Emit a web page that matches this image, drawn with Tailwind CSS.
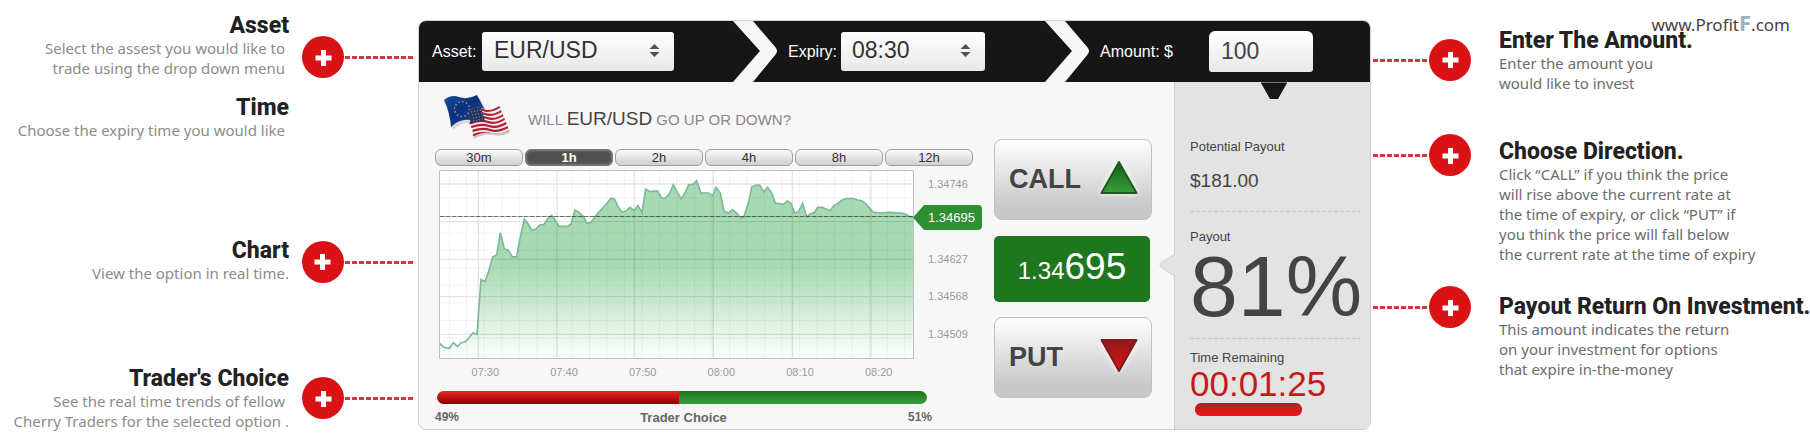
<!DOCTYPE html>
<html lang="en">
<head>
    <meta charset="UTF-8">
    <meta name="viewport" content="width=device-width, initial-scale=1.0">
    <title>How To Trade - ProfitF</title>
    <script src="https://cdn.jsdelivr.net/npm/@tailwindcss/browser@4"></script>
</head>
<body class="bg-white font-['Liberation_Sans',Arial,sans-serif]">
    <div class="relative flex items-start">

        <!-- Left notes -->
        <aside class="w-[415px] shrink-0 pt-3 text-right font-['Noto_Sans',sans-serif] text-[15px] leading-5 text-[#8c8c8c]">
            <div class="flex items-end">
                <div class="flex-1 pr-1">
                    <h2 class="-mr-1 -mb-[2px] font-[Roboto,sans-serif] text-[23px] leading-7 font-extrabold text-[#222]">Asset</h2>
                    <p>Select the assest you would like to<br>trade using the drop down menu</p>
                </div>
                <div class="ml-[13px] flex items-center">
                    <svg class="size-[42px]" viewBox="0 0 42 42"><circle cx="21" cy="21" r="21" fill="#d91216"/><path d="M21.500 14v16M13.500 22h16" stroke="#fff" stroke-width="5"/></svg>
                    <svg class="ml-px h-[3px] w-[70px]"><path d="M0 1.500h70" stroke="#cc3a3f" stroke-width="3" stroke-dasharray="5 2"/></svg>
                </div>
            </div>

            <div class="mt-4 pr-[130px]">
                <h2 class="-mr-1 -mb-[2px] font-[Roboto,sans-serif] text-[23px] leading-7 font-extrabold text-[#222]">Time</h2>
                <p class="whitespace-nowrap">Choose the expiry time you would like</p>
            </div>

            <div class="mt-[97px] flex items-end">
                <div class="flex-1">
                    <h2 class="-mb-[2px] font-[Roboto,sans-serif] text-[23px] leading-7 font-extrabold text-[#222]">Chart</h2>
                    <p>View the option in real time.</p>
                </div>
                <div class="ml-[13px] flex items-center">
                    <svg class="size-[42px]" viewBox="0 0 42 42"><circle cx="21" cy="21" r="21" fill="#d91216"/><path d="M20.500 13v16M12.500 21h16" stroke="#fff" stroke-width="5"/></svg>
                    <svg class="ml-px h-[3px] w-[70px]"><path d="M0 1.500h70" stroke="#cc3a3f" stroke-width="3" stroke-dasharray="5 2"/></svg>
                </div>
            </div>

            <div class="mt-[82px] flex items-center">
                <div class="flex-1">
                    <h2 class="-mb-[2px] font-[Roboto,sans-serif] text-[23px] leading-7 font-extrabold text-[#222]">Trader's Choice</h2>
                    <p class="pr-1">See the real time trends of fellow</p>
                    <p class="whitespace-nowrap">Cherry Traders for the selected option .</p>
                </div>
                <div class="ml-[13px] flex items-center">
                    <svg class="size-[42px]" viewBox="0 0 42 42"><circle cx="21" cy="21" r="21" fill="#d91216"/><path d="M21.500 14v16M13.500 22h16" stroke="#fff" stroke-width="5"/></svg>
                    <svg class="ml-px h-[3px] w-[70px]"><path d="M0 1.500h70" stroke="#cc3a3f" stroke-width="3" stroke-dasharray="5 2"/></svg>
                </div>
            </div>
        </aside>

        <!-- Trading panel -->
        <main class="mt-5 ml-[3px] min-w-0 flex-1 rounded-lg border border-[#d0d0d0] bg-[#f7f7f7]">
            <form class="flex h-[61px] items-center rounded-t-[7px] bg-[#161616] pl-[13px] text-white">
                <label for="asset" class="w-[50px]">Asset:</label>
                <div class="relative">
                    <select id="asset" class="h-[39px] w-48 appearance-none rounded-[3px] bg-linear-to-b from-white to-[#e8e8e8] pb-[2px] pl-3 text-[23px] text-[#333]">
                        <option>EUR/USD</option>
                    </select>
                    <svg class="pointer-events-none absolute top-3 right-[14px] h-[13px] w-[11px]" viewBox="0 0 11 13" fill="#4a5358"><path d="M5.500 0l5 5h-10zM5.500 13l5-5h-10z"/></svg>
                </div>
                <svg class="ml-[59px] h-[61px] w-11" viewBox="0 0 44 61" fill="#f7f7f7"><path d="M0 0h20l23 27q2 3 0 6L20 61H0l27-31z"/></svg>
                <label for="expiry" class="ml-[11px] w-[53px]">Expiry:</label>
                <div class="relative">
                    <select id="expiry" class="h-[39px] w-36 appearance-none rounded-[3px] bg-linear-to-b from-white to-[#e8e8e8] pb-[2px] pl-[11px] text-[23px] text-[#333]">
                        <option>08:30</option>
                    </select>
                    <svg class="pointer-events-none absolute top-3 right-[14px] h-[13px] w-[11px]" viewBox="0 0 11 13" fill="#4a5358"><path d="M5.500 0l5 5h-10zM5.500 13l5-5h-10z"/></svg>
                </div>
                <svg class="ml-[60px] h-[61px] w-11" viewBox="0 0 44 61" fill="#f7f7f7"><path d="M0 0h20l23 27q2 3 0 6L20 61H0l27-31z"/></svg>
                <label for="amount" class="ml-[11px] w-[109px]">Amount: $</label>
                <input id="amount" type="text" value="100" class="h-[41px] w-[104px] rounded-t-md rounded-b-[3px] bg-linear-to-b from-white to-[#e8e8e8] pl-3 text-[23px] text-[#444]">
            </form>

            <div class="flex">
                <!-- Chart -->
                <section class="min-w-0 flex-1 pl-4">
                    <div class="flex items-start pt-[13px] pl-2">
                        <svg class="h-[44px] w-[68px]" viewBox="0 0 68 44">
                            <defs>
                                <linearGradient id="eu" x1="0" y1="0" x2="1" y2="1"><stop offset="0" stop-color="#1d4fa3"/><stop offset=".4" stop-color="#0c2f7c"/><stop offset=".7" stop-color="#123f96"/><stop offset="1" stop-color="#071f55"/></linearGradient>
                                <clipPath id="us"><path d="M26 15q8-4 15-1t15-4l10 25q-7 5-17 3t-19 4q1-6-4-14z"/></clipPath>
                            </defs>
                            <path d="M2 5q7-6 15-3t18-2l11 21q-6 6-17 4T8 32Q7 18 2 5z" fill="#000" opacity=".12" transform="translate(2 3)"/>
                            <path d="M1 5q7-6 15-3t18-2l11 21q-6 6-17 4T8 32Q7 18 1 5z" fill="url(#eu)"/>
                            <circle cx="19" cy="14" r="7.500" fill="none" stroke="#b3a850" stroke-width="1.400" stroke-dasharray="1.400 2.530"/>
                            <path d="M26 15q8-4 15-1t15-4l10 25q-7 5-17 3t-19 4q1-6-4-14z" fill="#000" opacity=".2" transform="translate(1 2)"/>
                            <g clip-path="url(#us)">
                                <path d="M20 5h48v39H20z" fill="#f3eded"/>
                                <g fill="none" stroke="#b51f35" stroke-width="2.100">
                                    <path d="M22 17q10-5 18-2t18-4"/>
                                    <path d="M22 21q12-5 20-2t18-4"/>
                                    <path d="M24 25q12-5 20-2t18-4"/>
                                    <path d="M25 29q12-5 20-2t18-4"/>
                                    <path d="M26 33q12-5 20-2t19-4"/>
                                    <path d="M27 37q12-5 20-2t20-4"/>
                                    <path d="M28 41q12-5 20-2t20-4"/>
                                </g>
                                <path d="M24 15q8-5 14-2l4 13q-7-1-14 3z" fill="#27375f"/>
                                <path d="M28 17l10-2M29 20l10-2M30 23l10-2M30 26l10-2" stroke="#8e98b3" stroke-dasharray="1 2"/>
                            </g>
                        </svg>
                        <h1 class="pt-3 pl-[17px] text-[15px] leading-6 text-[#888]">WILL <span class="text-[19px] text-[#444]">EUR/USD</span> GO UP OR DOWN?</h1>
                    </div>

                    <div class="mt-[10px] mr-[10px] grid grid-cols-6 gap-[2px] text-[13px] text-[#333]">
                        <button class="h-[17px] rounded-md border border-[#a0a0a0] bg-linear-to-b from-[#fafafa] to-[#cfcfcf] leading-[15px]">30m</button>
                        <button class="h-[17px] rounded-md border border-[#777] bg-[#505050] leading-[15px] font-bold text-white inset-shadow-[0_0_3px_#aaa]">1h</button>
                        <button class="h-[17px] rounded-md border border-[#a0a0a0] bg-linear-to-b from-[#fafafa] to-[#cfcfcf] leading-[15px]">2h</button>
                        <button class="h-[17px] rounded-md border border-[#a0a0a0] bg-linear-to-b from-[#fafafa] to-[#cfcfcf] leading-[15px]">4h</button>
                        <button class="h-[17px] rounded-md border border-[#a0a0a0] bg-linear-to-b from-[#fafafa] to-[#cfcfcf] leading-[15px]">8h</button>
                        <button class="h-[17px] rounded-md border border-[#a0a0a0] bg-linear-to-b from-[#fafafa] to-[#cfcfcf] leading-[15px]">12h</button>
                    </div>

                    <div class="mt-1 flex pl-1">
                        <svg class="h-[189px] min-w-0 flex-1" viewBox="42 90 1425 567" preserveAspectRatio="none">
                            <defs>
                                <linearGradient id="area" gradientUnits="userSpaceOnUse" x1="0" y1="370" x2="0" y2="657"><stop offset="0" stop-color="#a6dab3"/><stop offset="1" stop-color="#fdfffd"/></linearGradient>
                            </defs>
                            <path d="M42 90h1425v567H42z" fill="#fff"/>
                            <path d="M44 610L56 622 73 625 85 608 97 619 109 608 122 605 133 592 144 579 156 583 168 419 180 425 191 394 203 351 215 345 226 278 238 326 249 330 262 350 275 351 285 295 298 237 310 253 321 271 333 267 344 255 356 254 369 235 380 226 392 242 403 259 427 259 438 252 450 210 462 217 474 228 486 250 497 248 509 232 521 217 533 204 545 191 557 176 568 176 580 202 591 216 603 213 615 202 627 211 639 197 651 218 662 147 675 155 697 153 710 174 721 174 734 160 745 134 757 157 768 176 779 161 791 134 803 134 815 122 828 159 850 159 863 168 873 142 886 160 897 214 911 219 922 209 935 219 945 232 956 232 970 190 980 141 992 136 1004 135 1016 156 1028 142 1040 159 1051 189 1075 193 1087 183 1098 190 1109 219 1121 215 1133 190 1145 231 1156 221 1168 218 1178 202 1191 202 1215 212 1227 196 1238 191 1250 181 1262 176 1286 176 1298 180 1311 182 1322 191 1334 204 1344 216 1368 219 1391 217 1430 219 1442 223 1452 229 1466 232V657H44z" fill="url(#area)"/>
                            <!-- minor grid -->
                            <path d="M73 90v567M125 90v567M178 90v567M231 90v567M283 90v567M336 90v567M388 90v567M441 90v567M494 90v567M546 90v567M598 90v567M651 90v567M703 90v567M756 90v567M809 90v567M861 90v567M914 90v567M966 90v567M1019 90v567M1071 90v567M1124 90v567M1176 90v567M1229 90v567M1282 90v567M1334 90v567M1387 90v567M1439 90v567M42 121h1425M42 174h1425M42 279h1425M42 331h1425M42 384h1425M42 436h1425M42 489h1425M42 541h1425M42 594h1425M42 646h1425" fill="none" stroke="#000" stroke-opacity=".07" stroke-width="3" stroke-dasharray="6 4"/>
                            <!-- major grid -->
                            <path d="M160 90v567M396 90v567M628 90v567M865 90v567M1102 90v567M1338 90v567M42 132h1425M42 245h1425M42 358h1425M42 470h1425M42 583h1425" fill="none" stroke="#000" stroke-opacity=".1" stroke-width="4"/>
                            <path d="M44 610L56 622 73 625 85 608 97 619 109 608 122 605 133 592 144 579 156 583 168 419 180 425 191 394 203 351 215 345 226 278 238 326 249 330 262 350 275 351 285 295 298 237 310 253 321 271 333 267 344 255 356 254 369 235 380 226 392 242 403 259 427 259 438 252 450 210 462 217 474 228 486 250 497 248 509 232 521 217 533 204 545 191 557 176 568 176 580 202 591 216 603 213 615 202 627 211 639 197 651 218 662 147 675 155 697 153 710 174 721 174 734 160 745 134 757 157 768 176 779 161 791 134 803 134 815 122 828 159 850 159 863 168 873 142 886 160 897 214 911 219 922 209 935 219 945 232 956 232 970 190 980 141 992 136 1004 135 1016 156 1028 142 1040 159 1051 189 1075 193 1087 183 1098 190 1109 219 1121 215 1133 190 1145 231 1156 221 1168 218 1178 202 1191 202 1215 212 1227 196 1238 191 1250 181 1262 176 1286 176 1298 180 1311 182 1322 191 1334 204 1344 216 1368 219 1391 217 1430 219 1442 223 1452 229 1466 232" fill="none" stroke="#7dba9a" stroke-width="5"/>
                            <path d="M44 229.500h1420" stroke="#222" stroke-opacity=".65" stroke-width="3" stroke-dasharray="15 3"/>
                            <path d="M43.500 91.500h1422v564h-1422z" fill="none" stroke="#c4c0c0" stroke-width="3"/>
                        </svg>
                        <div class="relative w-[69px] shrink-0 text-[11px] text-[#999]">
                            <div class="-mt-[5px] grid h-[188px] grid-rows-5 items-center pl-[14px]">
                                <span class="row-start-1">1.34746</span>
                                <span class="row-start-3">1.34627</span>
                                <span class="row-start-4">1.34568</span>
                                <span class="row-start-5">1.34509</span>
                            </div>
                            <div class="absolute top-[35px] -left-px flex h-[25px]">
                                <svg class="h-[25px] w-3" viewBox="0 0 12 25" fill="#2f8f33"><path d="M12 0h-1L0 12.500 11 25h1z"/></svg>
                                <span class="w-[57px] rounded-r-sm bg-[#2f8f33] pl-[3px] text-[13px] leading-[26px] text-white">1.34695</span>
                            </div>
                        </div>
                    </div>

                    <div class="mr-[65px] ml-[11px] grid grid-cols-6 pt-1 text-center text-[11px] leading-[18px] text-[#999]">
                        <span>07:30</span>
                        <span>07:40</span>
                        <span>07:50</span>
                        <span>08:00</span>
                        <span>08:10</span>
                        <span>08:20</span>
                    </div>

                    <div class="mt-[10px] mr-[56px] ml-[2px] flex h-[13px] overflow-hidden rounded-full">
                        <div class="bg-linear-to-b from-[#ee2222] via-[#c01010] to-[#900000]" style="width: 49.4%"></div>
                        <div class="flex-1 bg-linear-to-b from-[#1c741c] to-[#38a038]"></div>
                    </div>
                    <div class="mr-[51px] flex justify-between pt-[5px] pb-[3px] text-[12px] leading-[17px] font-bold text-[#666]">
                        <span>49%</span>
                        <span class="text-[13px]">Trader Choice</span>
                        <span>51%</span>
                    </div>
                </section>

                <!-- Call / put -->
                <section class="ml-[11px] w-[158px] shrink-0 pt-[57px]">
                    <button class="flex h-[81px] w-full items-center justify-between rounded-lg border border-[#c4c0c0] bg-linear-to-b from-white to-[#c8c8c8] to-85% pr-[9px] pl-[14px] text-[27px] font-bold text-[#444]">
                        CALL
                        <svg class="h-[43px] w-[46px] drop-shadow-[0_0_3px_#fffff0]" viewBox="0 0 46 43">
                            <defs><linearGradient id="up" x1="0" y1="0" x2="0" y2="1"><stop offset="0" stop-color="#145c14"/><stop offset="1" stop-color="#3a9e3e"/></linearGradient></defs>
                            <path d="M23 4L5.500 35h35z" fill="url(#up)" stroke="#1d5a20" stroke-width="2" stroke-linejoin="round"/>
                        </svg>
                    </button>
                    <div class="mt-[16px] mr-[2px] h-[66px] rounded-[5px] bg-[#1e761e] text-center text-2xl leading-[62px] text-white">1.34<span class="text-[37px]">695</span></div>
                    <button class="mt-[15px] flex h-[81px] w-full items-center justify-between rounded-lg border border-[#c4c0c0] bg-linear-to-b from-white to-[#c8c8c8] to-85% pr-[9px] pl-[14px] text-[27px] font-bold text-[#444]">
                        PUT
                        <svg class="h-[43px] w-[46px] drop-shadow-[0_0_3px_#fffff0]" viewBox="0 0 46 43">
                            <defs><linearGradient id="down" x1="0" y1="0" x2="0" y2="1"><stop offset="0" stop-color="#8e1a1a"/><stop offset="1" stop-color="#e01212"/></linearGradient></defs>
                            <path d="M23 35L5.500 4h35z" fill="url(#down)" stroke="#7e1c1c" stroke-width="2" stroke-linejoin="round"/>
                        </svg>
                    </button>
                </section>

                <!-- Payout -->
                <section class="relative ml-[22px] w-[196px] shrink-0 rounded-br-[7px] border-l border-[#d0d0d0] bg-[#e3e3e3] pt-[55px] pl-[15px] text-[13px] leading-5 text-[#444]">
                    <svg class="absolute top-0 left-[86px] h-[17px] w-[26px]" viewBox="0 0 26 17"><path d="M0 1h26l-9 16H9z" fill="#161616"/><path d="M0 .5h26" stroke="#777"/></svg>
                    <svg class="absolute top-[171px] -left-4 h-6 w-4" viewBox="0 0 16 24"><path d="M16 1L3 9q-4 3 0 6l13 8" fill="#e3e3e3" stroke="#d0d0d0"/></svg>
                    <p>Potential Payout</p>
                    <p class="pt-3 text-[19px] leading-6">$181.00</p>
                    <svg class="mt-[18px] block h-px w-[170px]"><path d="M0 .5h170" stroke="#c9c9b4" stroke-dasharray="4 2"/></svg>
                    <p class="mt-[15px]">Payout</p>
                    <p class="text-[86px] leading-[78px]">81%</p>
                    <svg class="mt-[13px] block h-px w-[170px]"><path d="M0 .5h170" stroke="#c9c9b4" stroke-dasharray="4 2"/></svg>
                    <p class="mt-[9px]">Time Remaining</p>
                    <p class="text-[35px] leading-8 text-[#c41a1a]">00:01:25</p>
                    <div class="mt-[3px] ml-[5px] h-[13px] w-[107px] rounded-md bg-linear-to-b from-[#b02020] to-[#f01010]"></div>
                </section>
            </div>
        </main>

        <!-- Right notes -->
        <aside class="w-[439px] shrink-0 pt-[27px] font-['Noto_Sans',sans-serif] text-[15px] leading-5 text-[#6c6c6c]">
            <div class="flex items-center">
                <svg class="ml-[2px] h-[3px] w-[56px]"><path d="M0 1.500h56" stroke="#cc3a3f" stroke-width="3" stroke-dasharray="5 2"/></svg>
                <svg class="size-[42px]" viewBox="0 0 42 42"><circle cx="21" cy="21" r="21" fill="#d91216"/><path d="M21.500 13v16M13.500 21h16" stroke="#fff" stroke-width="5"/></svg>
                <div class="pl-7">
                    <h2 class="-mb-[2px] font-[Roboto,sans-serif] text-[23px] leading-7 font-extrabold text-[#222]">Enter The Amount.</h2>
                    <p>Enter the amount you<br>would like to invest</p>
                </div>
            </div>

            <div class="mt-[41px] flex items-start">
                <div class="flex items-center">
                    <svg class="ml-[2px] h-[3px] w-[56px]"><path d="M0 1.500h56" stroke="#cc3a3f" stroke-width="3" stroke-dasharray="5 2"/></svg>
                    <svg class="size-[42px]" viewBox="0 0 42 42"><circle cx="21" cy="21" r="21" fill="#d91216"/><path d="M21.500 14v16M13.500 22h16" stroke="#fff" stroke-width="5"/></svg>
                </div>
                <div class="pt-1 pl-7">
                    <h2 class="-mb-[2px] font-[Roboto,sans-serif] text-[23px] leading-7 font-extrabold text-[#222]">Choose Direction.</h2>
                    <p>Click “CALL” if you think the price<br>will rise above the current rate at<br>the time of expiry, or click “PUT” if<br>you think the price will fall below<br>the current rate at the time of expiry</p>
                </div>
            </div>

            <div class="mt-[22px] flex items-start">
                <div class="flex items-center">
                    <svg class="ml-[2px] h-[3px] w-[56px]"><path d="M0 1.500h56" stroke="#cc3a3f" stroke-width="3" stroke-dasharray="5 2"/></svg>
                    <svg class="size-[42px]" viewBox="0 0 42 42"><circle cx="21" cy="21" r="21" fill="#d91216"/><path d="M21.500 14v16M13.500 22h16" stroke="#fff" stroke-width="5"/></svg>
                </div>
                <div class="pt-[7px] pl-7">
                    <h2 class="-mb-[2px] font-[Roboto,sans-serif] text-[23px] leading-7 font-extrabold whitespace-nowrap text-[#222]">Payout Return On Investment.</h2>
                    <p>This amount indicates the return<br>on your investment for options<br>that expire in-the-money</p>
                </div>
            </div>
        </aside>

        <!-- Watermark -->
        <a href="/" class="absolute top-[10px] right-5 font-['Noto_Sans',sans-serif] text-[17px] leading-6 text-[#444]">www.Profit<span class="text-[22px] leading-6 font-bold text-[#9ab4bf]">F</span>.com</a>
    </div>
</body>
</html>
